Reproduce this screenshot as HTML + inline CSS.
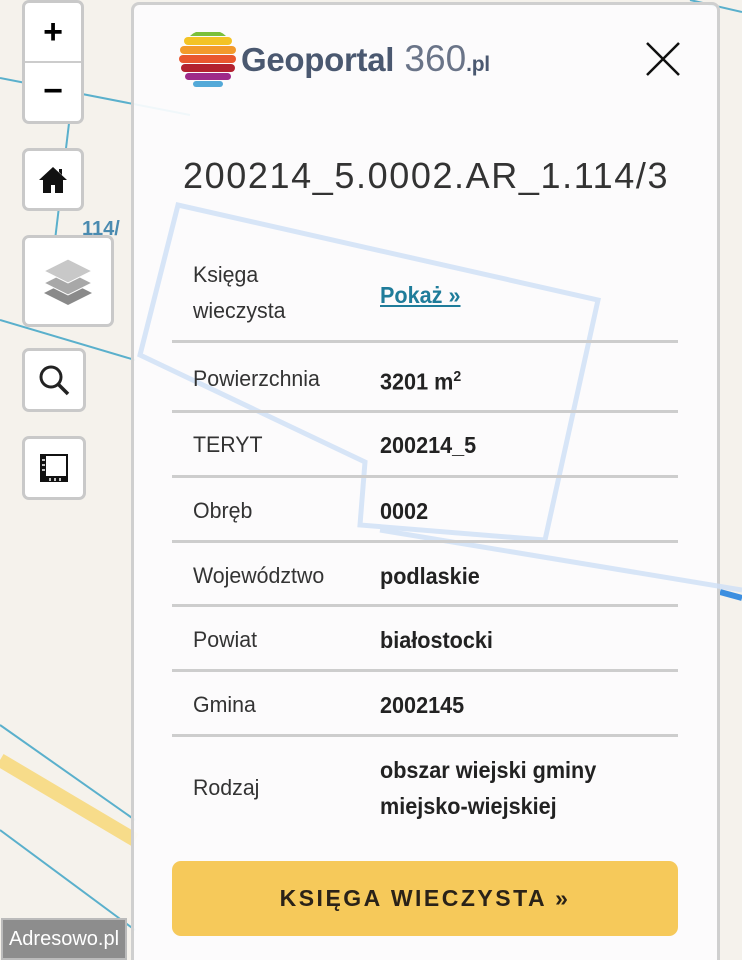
<!DOCTYPE html>
<html><head><meta charset="utf-8"><style>
*{margin:0;padding:0;box-sizing:border-box}
html,body{width:742px;height:960px;overflow:hidden}
body{background:#f5f2ec;font-family:"Liberation Sans",sans-serif}
#wrap{position:relative;width:742px;height:960px;overflow:hidden}
.btn{position:absolute;background:#fff;border:3px solid #c9c9c9;border-radius:7px;display:flex;align-items:center;justify-content:center}
#panel{position:absolute;left:131px;top:2px;width:589px;height:958px;background:rgba(252,252,253,0.93);border:3px solid #cfcfcf;border-bottom:none;border-radius:8px 8px 0 0}
.row{position:absolute;left:172px;width:506px;border-bottom:3px solid #cdcdcd}
.lbl{position:absolute;left:193px;font-size:22px;color:#333;line-height:36px;transform:scaleX(0.97);transform-origin:left}
.val{position:absolute;left:380px;font-size:23px;color:#222;font-weight:bold;line-height:36px;transform:scaleX(0.94);transform-origin:left}
</style></head><body><div id="wrap">
<svg width="742" height="960" style="position:absolute;left:0;top:0">
<g fill="none" stroke="#5ab0cc" stroke-width="2">
<line x1="0" y1="78" x2="190" y2="115"/>
<line x1="0" y1="320" x2="135" y2="360"/>
<line x1="70" y1="115" x2="55" y2="240"/>
<line x1="0" y1="725" x2="135" y2="820"/>
<line x1="0" y1="830" x2="135" y2="930"/>
<line x1="690" y1="0" x2="742" y2="12"/>
</g>
<line x1="0" y1="760" x2="135" y2="840" stroke="#f7dc8a" stroke-width="14"/>
<line x1="720" y1="592" x2="742" y2="598" stroke="#3c8fe0" stroke-width="6"/>
<text x="82" y="235" font-family="Liberation Sans" font-weight="bold" font-size="20" fill="#4a8bb0">114/</text>
</svg>
<div class="btn" style="left:22px;top:0;width:62px;height:124px;flex-direction:column">
<div style="height:60px;width:100%;border-bottom:2px solid #ccc;font-size:34px;font-weight:bold;text-align:center;line-height:58px">+</div>
<div style="height:60px;font-size:34px;font-weight:bold;line-height:56px">−</div></div>
<div class="btn" style="left:22px;top:148px;width:62px;height:63px"><svg width="30" height="28" viewBox="0 0 30 28"><path d="M15 1L1 14h4v13h8v-8h4v8h8V14h4L15 1z M21 3h3v6l-3-3z" fill="#111"/></svg></div>
<div class="btn" style="left:22px;top:235px;width:92px;height:92px"><svg width="56" height="52" viewBox="0 0 56 52"><path d="M28 26L4 38l24 12 24-12z" fill="#8a8a8a"/><path d="M28 16L4 28l24 12 24-12z" fill="#a8a8a8" stroke="#fff"/><path d="M28 4L4 16l24 12 24-12z" fill="#c8c8c8" stroke="#fff"/></svg></div>
<div class="btn" style="left:22px;top:348px;width:64px;height:64px"><svg width="34" height="34" viewBox="0 0 34 34"><circle cx="14" cy="14" r="10" fill="none" stroke="#222" stroke-width="3"/><line x1="21" y1="21" x2="31" y2="31" stroke="#222" stroke-width="3.5"/></svg></div>
<div class="btn" style="left:22px;top:436px;width:64px;height:64px"><svg width="32" height="32" viewBox="0 0 32 32"><rect x="2" y="2" width="28" height="28" fill="#111"/><rect x="8" y="4" width="20" height="20" fill="#fff"/><path d="M4 8h3M4 13h3M4 18h3M12 26v3M17 26v3M22 26v3" stroke="#fff" stroke-width="1.5"/></svg></div>
<div style="position:absolute;left:1px;top:918px;width:126px;height:42px;background:#8d8d8d;border:2px solid #bbb;color:#fff;font-size:20px;line-height:38px;text-align:center">Adresowo.pl</div>

<div id="panel"></div>
<svg width="742" height="960" style="position:absolute;left:0;top:0" fill="none" stroke="#cfe0f7" stroke-width="5" opacity="0.8">
<path d="M178 205L140 355L365 462L360 525L545 540L598 300Z"/>
<line x1="380" y1="530" x2="742" y2="590"/>
</svg>
<svg width="60" height="62" viewBox="0 0 60 62" style="position:absolute;left:178px;top:28px">
<path d="M18 4h24a16 16 0 0 1 6 4H12a16 16 0 0 1 6-4z" fill="#7bbf3a"/>
<rect x="6" y="9" width="48" height="8" rx="4" fill="#f3c326"/>
<rect x="2" y="18" width="56" height="8" rx="4" fill="#f29a2c"/>
<rect x="1" y="27" width="57" height="8" rx="4" fill="#e9572e"/>
<rect x="3" y="36" width="54" height="8" rx="4" fill="#b3212f"/>
<rect x="7" y="45" width="46" height="7" rx="3.5" fill="#9e2a8a"/>
<rect x="15" y="53" width="30" height="6" rx="3" fill="#53a9d8"/>
</svg>
<div style="position:absolute;left:241px;top:38px;font-size:33px;color:#4a5870;font-weight:bold;letter-spacing:-0.3px">Geoportal<span style="font-weight:normal;color:#6a7488;font-size:37px;letter-spacing:0"> 360</span><span style="font-size:21px">.pl</span></div>
<svg width="34" height="34" viewBox="0 0 34 34" style="position:absolute;left:646px;top:42px"><path d="M1 1L33 33M33 1L1 33" stroke="#111" stroke-width="2.5"/></svg>
<div style="position:absolute;left:183px;top:155px;font-size:36px;color:#333;letter-spacing:1.6px">200214_5.0002.AR_1.114/3</div>

<div class="lbl" style="top:257px">Księga<br>wieczysta</div>
<div class="val" style="top:277px;color:#1f7c9a;text-decoration:underline">Pokaż »</div>
<div class="row" style="top:340px"></div>
<div class="lbl" style="top:361px">Powierzchnia</div>
<div class="val" style="top:359px">3201 m<sup style="font-size:15px">2</sup></div>
<div class="row" style="top:410px"></div>
<div class="lbl" style="top:427px">TERYT</div><div class="val" style="top:427px">200214_5</div>
<div class="row" style="top:475px"></div>
<div class="lbl" style="top:493px">Obręb</div><div class="val" style="top:493px">0002</div>
<div class="row" style="top:540px"></div>
<div class="lbl" style="top:558px">Województwo</div><div class="val" style="top:558px">podlaskie</div>
<div class="row" style="top:604px"></div>
<div class="lbl" style="top:622px">Powiat</div><div class="val" style="top:622px">białostocki</div>
<div class="row" style="top:669px"></div>
<div class="lbl" style="top:687px">Gmina</div><div class="val" style="top:687px">2002145</div>
<div class="row" style="top:734px"></div>
<div class="lbl" style="top:770px">Rodzaj</div>
<div class="val" style="top:752px">obszar wiejski gminy<br>miejsko-wiejskiej</div>
<div style="position:absolute;left:172px;top:861px;width:506px;height:75px;background:#f6c95a;border-radius:9px;text-align:center;line-height:75px;font-size:23px;font-weight:bold;letter-spacing:2.5px;color:#2a2218">KSIĘGA WIECZYSTA »</div>
</div></body></html>
